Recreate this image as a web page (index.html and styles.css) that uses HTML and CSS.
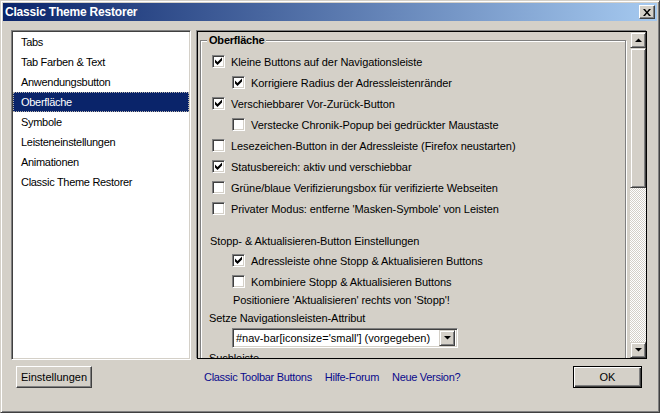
FILE: index.html
```html
<!DOCTYPE html>
<html lang="de">
<head>
    <meta charset="UTF-8">
    <title>Classic Theme Restorer</title>
    <link rel="stylesheet" href="styles.css">
</head>
<body>
<div class="window">
    <!-- Title bar -->
    <div class="titlebar">
        <span class="title">Classic Theme Restorer</span>
        <button class="close-btn">
            <svg width="8" height="7" viewBox="0 0 8 7"><path d="M0 0h2l2 2.4 2-2.4h2l-3 3.5 3 3.5h-2l-2-2.4-2 2.4h-2l3-3.5z" fill="#000"/></svg>
        </button>
    </div>

    <div class="content">
        <div class="main">
            <!-- Categories -->
            <ul class="cat-list">
                <li>Tabs</li>
                <li>Tab Farben &amp; Text</li>
                <li>Anwendungsbutton</li>
                <li class="selected">Oberfläche</li>
                <li>Symbole</li>
                <li>Leisteneinstellungen</li>
                <li>Animationen</li>
                <li>Classic Theme Restorer</li>
            </ul>

            <!-- Settings pane -->
            <div class="pane">
                <div class="pane-body">
                    <div class="groupbox">
                        <span class="caption">Oberfläche</span>

                        <label class="row"><span class="check on"><svg width="11" height="11" viewBox="0 0 11 11"><polygon points="2,3.5 4.5,6 9,1.5 9,4.5 4.5,9 2,6.5"/></svg></span>Kleine Buttons auf der Navigationsleiste</label>
                        <label class="row sub"><span class="check on"><svg width="11" height="11" viewBox="0 0 11 11"><polygon points="2,3.5 4.5,6 9,1.5 9,4.5 4.5,9 2,6.5"/></svg></span>Korrigiere Radius der Adressleistenränder</label>
                        <label class="row"><span class="check on"><svg width="11" height="11" viewBox="0 0 11 11"><polygon points="2,3.5 4.5,6 9,1.5 9,4.5 4.5,9 2,6.5"/></svg></span>Verschiebbarer Vor-Zurück-Button</label>
                        <label class="row sub"><span class="check"></span>Verstecke Chronik-Popup bei gedrückter Maustaste</label>
                        <label class="row"><span class="check"></span>Lesezeichen-Button in der Adressleiste (Firefox neustarten)</label>
                        <label class="row"><span class="check on"><svg width="11" height="11" viewBox="0 0 11 11"><polygon points="2,3.5 4.5,6 9,1.5 9,4.5 4.5,9 2,6.5"/></svg></span>Statusbereich: aktiv und verschiebbar</label>
                        <label class="row"><span class="check"></span>Grüne/blaue Verifizierungsbox für verifizierte Webseiten</label>
                        <label class="row"><span class="check"></span>Privater Modus: entferne 'Masken-Symbole' von Leisten</label>

                        <div class="label first">Stopp- &amp; Aktualisieren-Button Einstellungen</div>
                        <label class="row sub"><span class="check on"><svg width="11" height="11" viewBox="0 0 11 11"><polygon points="2,3.5 4.5,6 9,1.5 9,4.5 4.5,9 2,6.5"/></svg></span>Adressleiste ohne Stopp &amp; Aktualisieren Buttons</label>
                        <label class="row sub"><span class="check"></span>Kombiniere Stopp &amp; Aktualisieren Buttons</label>
                        <div class="note">Positioniere 'Aktualisieren' rechts von 'Stopp'!</div>

                        <div class="label attr">Setze Navigationsleisten-Attribut</div>
                        <div class="select">
                            <span class="select-text">#nav-bar[iconsize='small'] (vorgegeben)</span>
                            <span class="arrow-btn"><svg width="7" height="4" viewBox="0 0 7 4"><polygon points="0,0 7,0 3.5,3.6"/></svg></span>
                        </div>

                        <div class="label search">Suchleiste</div>
                    </div>
                </div>

                <div class="scrollbar">
                    <span class="sb-btn"><svg width="7" height="4" viewBox="0 0 7 4"><polygon points="0,4 3.5,0.4 7,4"/></svg></span>
                    <span class="sb-thumb"></span>
                    <span class="sb-track"></span>
                    <span class="sb-btn"><svg width="7" height="4" viewBox="0 0 7 4"><polygon points="0,0 7,0 3.5,3.6"/></svg></span>
                </div>
            </div>
        </div>

        <!-- Footer -->
        <div class="footer">
            <button class="btn btn-settings">Einstellungen</button>
            <div class="links">
                <a href="#">Classic Toolbar Buttons</a>
                <a href="#">Hilfe-Forum</a>
                <a href="#">Neue Version?</a>
            </div>
            <button class="btn btn-ok">OK</button>
        </div>
    </div>
</div>
</body>
</html>
```

FILE: styles.css
```css
/* Reset */
* {
    margin: 0;
    padding: 0;
    box-sizing: border-box;
}

body {
    background: #d4d0c8;
    font-family: "Liberation Sans", Arial, sans-serif;
    font-size: 11px;
    letter-spacing: -0.3px;
    color: #000;
}

/* Window frame */
.window {
    width: 660px;
    height: 413px;
    background: #d4d0c8;
    border: 1px solid;
    border-color: #d4d0c8 #404040 #404040 #d4d0c8;
    box-shadow: inset 1px 1px 0 #fff, inset -1px -1px 0 #808080;
    padding: 2px;
    display: flex;
    flex-direction: column;
    overflow: hidden;
}

.titlebar {
    height: 18px;
    flex: none;
    display: flex;
    align-items: center;
    justify-content: space-between;
    padding-left: 2px;
    background: linear-gradient(to right, #0a246a, #a6caf0);
}

.title {
    color: #fff;
    font-weight: bold;
    font-size: 12px;
    letter-spacing: -0.2px;
}

.close-btn {
    width: 16px;
    height: 14px;
    margin-right: 2px;
    display: flex;
    align-items: center;
    justify-content: center;
    background: #d4d0c8;
    border: 1px solid;
    border-color: #fff #404040 #404040 #fff;
    box-shadow: inset -1px -1px 0 #808080;
}

.content {
    flex: 1;
    padding: 9px 10px 0 8px;
    display: flex;
    flex-direction: column;
}

.main {
    display: flex;
    gap: 6px;
    height: 330px;
}

/* Category list */
.cat-list {
    list-style: none;
    width: 180px;
    flex: none;
    background: #fff;
    border: 1px solid;
    border-color: #808080 #fff #fff #808080;
    box-shadow: inset 1px 1px 0 #404040, inset -1px -1px 0 #d4d0c8;
    padding: 1px;
}

.cat-list li {
    height: 20px;
    line-height: 20px;
    padding-left: 8px;
    white-space: nowrap;
}

.cat-list li.selected {
    background: #0a246a;
    color: #fff;
    outline: 1px dotted #b8b4ac;
    outline-offset: -1px;
}

/* Settings pane */
.pane {
    width: 450px;
    height: 328px;
    margin-top: 1px;
    border: 1px solid #000;
    box-shadow: -1px -1px 0 #808080;
    display: flex;
    overflow: hidden;
}

.pane-body {
    flex: 1;
    overflow: hidden;
    padding: 8px 4px 0 2px;
}

.groupbox {
    position: relative;
    height: 400px;
    border: 1px solid #808080;
    box-shadow: inset 1px 1px 0 #fff, 1px 1px 0 #fff;
    padding: 10px 0 0 11px;
    letter-spacing: -0.08px;
}

.caption {
    position: absolute;
    top: -7px;
    left: 6px;
    padding: 0 2px;
    background: #d4d0c8;
    font-weight: bold;
    line-height: 13px;
    letter-spacing: -0.2px;
}

.row {
    display: flex;
    align-items: center;
    height: 21px;
    white-space: nowrap;
}

.row.sub {
    margin-left: 20px;
}

.check {
    width: 13px;
    height: 13px;
    flex: none;
    margin-right: 6px;
    background: #fff;
    border: 1px solid;
    border-color: #808080 #fff #fff #808080;
    box-shadow: inset 1px 1px 0 #404040, inset -1px -1px 0 #d4d0c8;
}

.check svg {
    display: block;
}

.label {
    height: 17px;
    line-height: 17px;
    margin-left: -2px;
    white-space: nowrap;
}

.label.first {
    margin-top: 14px;
}

.label.attr {
    height: 18px;
    line-height: 18px;
    margin-left: -3px;
}

.label.search {
    margin-top: 2px;
    margin-left: -3px;
}

.note {
    height: 17px;
    line-height: 17px;
    margin-left: 21px;
}

/* Dropdown */
.select {
    width: 226px;
    height: 20px;
    margin: 1px 0 0 20px;
    background: #fff;
    border: 1px solid;
    border-color: #808080 #fff #fff #808080;
    box-shadow: inset 1px 1px 0 #404040, inset -1px -1px 0 #d4d0c8;
    display: flex;
    align-items: center;
    padding: 2px 2px 2px 3px;
}

.select-text {
    flex: 1;
    white-space: nowrap;
    letter-spacing: 0;
}

.arrow-btn {
    width: 16px;
    height: 16px;
    flex: none;
    display: flex;
    align-items: center;
    justify-content: center;
    background: #d4d0c8;
    border: 1px solid;
    border-color: #d4d0c8 #404040 #404040 #d4d0c8;
    box-shadow: inset 1px 1px 0 #fff, inset -1px -1px 0 #808080;
}

/* Scrollbar */
.scrollbar {
    width: 16px;
    flex: none;
    display: flex;
    flex-direction: column;
}

.sb-btn,
.sb-thumb {
    background: #d4d0c8;
    border: 1px solid;
    border-color: #d4d0c8 #404040 #404040 #d4d0c8;
    box-shadow: inset 1px 1px 0 #fff, inset -1px -1px 0 #808080;
}

.sb-btn {
    height: 16px;
    flex: none;
    display: flex;
    align-items: center;
    justify-content: center;
}

.sb-thumb {
    height: 140px;
    flex: none;
}

.sb-track {
    flex: 1;
    background: repeating-conic-gradient(#fff 0 25%, #d4d0c8 0 50%) 0 0 / 2px 2px;
}

/* Footer */
.footer {
    display: flex;
    align-items: center;
    margin-top: 6px;
    height: 22px;
}

.btn {
    height: 22px;
    font: inherit;
    color: #000;
    background: #d4d0c8;
    border: 1px solid;
    border-color: #fff #404040 #404040 #fff;
    box-shadow: inset -1px -1px 0 #808080;
}

.btn-settings {
    width: 76px;
    margin-left: 5px;
}

.links {
    display: flex;
    gap: 13px;
    margin-left: 112px;
}

.links a {
    color: #0a0a8c;
    text-decoration: none;
}

.btn-ok {
    width: 69px;
    margin-left: auto;
    margin-right: 5px;
    border: 1px solid #000;
    box-shadow: inset 1px 1px 0 #fff, inset -1px -1px 0 #404040, inset -2px -2px 0 #808080;
}
```
